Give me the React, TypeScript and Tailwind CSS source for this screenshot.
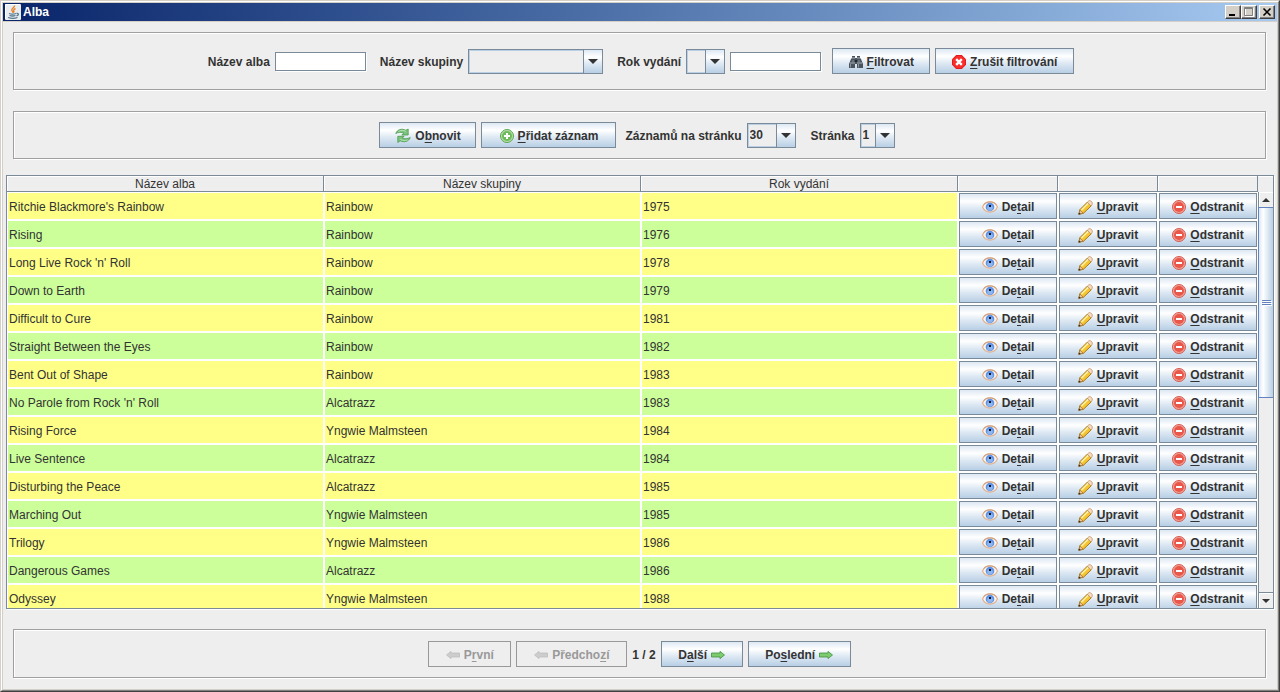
import {useState} from 'react';
import type {ReactNode} from 'react';
import clsx from 'clsx';

type Album = {title: string; band: string; year: number};

const ALBUMS: Album[] = [
  {title: "Ritchie Blackmore's Rainbow", band: 'Rainbow', year: 1975},
  {title: 'Rising', band: 'Rainbow', year: 1976},
  {title: "Long Live Rock 'n' Roll", band: 'Rainbow', year: 1978},
  {title: 'Down to Earth', band: 'Rainbow', year: 1979},
  {title: 'Difficult to Cure', band: 'Rainbow', year: 1981},
  {title: 'Straight Between the Eyes', band: 'Rainbow', year: 1982},
  {title: 'Bent Out of Shape', band: 'Rainbow', year: 1983},
  {title: "No Parole from Rock 'n' Roll", band: 'Alcatrazz', year: 1983},
  {title: 'Rising Force', band: 'Yngwie Malmsteen', year: 1984},
  {title: 'Live Sentence', band: 'Alcatrazz', year: 1984},
  {title: 'Disturbing the Peace', band: 'Alcatrazz', year: 1985},
  {title: 'Marching Out', band: 'Yngwie Malmsteen', year: 1985},
  {title: 'Trilogy', band: 'Yngwie Malmsteen', year: 1986},
  {title: 'Dangerous Games', band: 'Alcatrazz', year: 1986},
  {title: 'Odyssey', band: 'Yngwie Malmsteen', year: 1988},
];

/* ---------- icons ---------- */

function JavaIcon() {
  return (
    <svg width="16" height="16" viewBox="0 0 16 16" fill="none" aria-hidden="true">
      <rect width="16" height="16" rx="1" fill="#e9edf0" />
      <path d="M.5 15V.5H15" stroke="#fff" />
      <path d="M9.500 1.500c.6 2-3.600 2.600-2.600 5 .4 1 1.200 1.300 1.300 2.500M10.500 4.500c-2 1-2.400 2-1.300 4" stroke="#e8842a" strokeWidth="1.400" />
      <path d="M4 9.500c2 .8 5 .8 7 0M4.500 11.500c2 .7 4 .7 6 0M3 13.500c3 1 7 1 9.500 0M11.500 9.500c2.500-.6 2.500 1.800 0 2.300" stroke="#55788f" strokeWidth="1.300" />
    </svg>
  );
}

function BinocularsIcon() {
  return (
    <svg width="14" height="14" viewBox="0 0 14 14" aria-hidden="true">
      <path d="M3 1h3v2h2V1h3v2l1 1 2 5v4H8V9H6v4H0V9l2-5 1-1z" fill="#4a525c" />
      <path d="M3 3h3M8 3h3M1 8h5M8 8h5" stroke="#aab2bb" />
      <path d="M1.500 9v3.500M4 5v2M9.500 9v3.500M10 5v2" stroke="#8a949e" />
      <path d="M6 5h2v2H6z" fill="#1f242a" />
    </svg>
  );
}

function CancelIcon() {
  return (
    <svg width="14" height="14" viewBox="0 0 14 14" aria-hidden="true">
      <path d="M4.200 0h5.600L14 4.200v5.600L9.800 14H4.200L0 9.800V4.200z" fill="#e01b1b" />
      <path d="M4.600 1h4.800L13 4.600v4.800L9.400 13H4.600L1 9.400V4.600z" fill="#fb2c2c" />
      <path d="M4.200 4.200l5.600 5.600M9.800 4.200L4.200 9.800" stroke="#fff" strokeWidth="2.400" />
    </svg>
  );
}

function RefreshIcon() {
  return (
    <svg width="16" height="16" viewBox="0 0 16 16" stroke="#4a9a4e" strokeWidth=".8" strokeLinejoin="round" aria-hidden="true">
      <path d="M.8 5.500C2 1.500 7 .2 10.800 2.200L13.200 1v6H6.800l2-1.700C6.500 4 3.500 4 .8 5.500z" fill="#7cc47d" />
      <path d="M15.200 9.500C14 13.500 9 14.800 5.200 12.800L2.800 14.500V8.300h6.400l-2 1.600c2.300 1.300 5.300 1.200 8-.4z" fill="#7cc47d" />
      <path d="M3.500 3.700C5.500 2 8.500 2 10.800 3.400M12.500 11.800c-2 1.200-4.800 1-7.200-.4" fill="none" stroke="#c4e8c0" />
    </svg>
  );
}

function AddIcon() {
  return (
    <svg width="14" height="14" viewBox="0 0 14 14" aria-hidden="true">
      <circle cx="7" cy="7" r="6.500" fill="#b9e0a8" stroke="#5aa552" />
      <circle cx="7" cy="7" r="5" fill="#6dbb5c" />
      <path d="M7 4v6M4 7h6" stroke="#fff" strokeWidth="2" />
    </svg>
  );
}

function EyeIcon() {
  return (
    <svg width="16" height="14" viewBox="0 0 16 14" fill="none" aria-hidden="true">
      <path d="M.5 7C3.500 0 12.500 0 15.500 7 12.500 13.800 3.500 13.800.5 7z" fill="#f8f3ef" stroke="#e3b08a" strokeWidth="1.200" />
      <path d="M1.500 4.800C4.500 1 11.500 1 14.500 4.800" stroke="#cf9a76" />
      <circle cx="8" cy="7" r="4.300" fill="#5f92e2" />
      <circle cx="8" cy="8" r="2.800" fill="#8fb6ef" />
      <rect x="7" y="5" width="2" height="2" fill="#0d1730" />
    </svg>
  );
}

function PencilIcon() {
  return (
    <svg width="15" height="15" viewBox="0 0 15 15" strokeLinejoin="round" aria-hidden="true">
      <path d="M2 9.500L9.500 2l3.800 3.800L5.500 13.200.8 14.300z" fill="#f5c531" stroke="#a9781f" />
      <path d="M3.300 10.300l7-7" stroke="#fdf0a8" strokeWidth="1.600" />
      <path d="M9.300 2.200L10.500 1c2-1.300 4.800 1.500 3.500 3.500l-1.200 1.300z" fill="#f6dcc2" stroke="#c08f62" strokeWidth=".8" />
      <path d="M1.800 10l3.400 3.200-4.400 1z" fill="#f0c9a0" stroke="#8a6226" strokeWidth=".6" />
      <path d="M1.100 12.400l1.700 1.500-2.300.6z" fill="#3b2b18" />
    </svg>
  );
}

function RemoveIcon() {
  return (
    <svg width="14" height="14" viewBox="0 0 14 14" aria-hidden="true">
      <circle cx="7" cy="7" r="6.500" fill="#f3a196" stroke="#d5594f" />
      <circle cx="7" cy="7" r="5" fill="#e9564a" />
      <path d="M4 7h6" stroke="#fff" strokeWidth="2" />
    </svg>
  );
}

function ArrowIcon({left = false}: {left?: boolean}) {
  return (
    <svg width="14" height="8" viewBox="0 0 14 8" strokeLinejoin="round" aria-hidden="true">
      {left
        ? <path d="M13.500 2v4H5v1.600L.5 4 5 .4V2z" fill="#cdcdcd" stroke="#bdbdbd" strokeWidth=".8" />
        : <path d="M.5 2v4H9v1.600L13.500 4 9 .4V2z" fill="#7ccb6f" stroke="#3f8f3c" strokeWidth=".8" />}
    </svg>
  );
}

/* ---------- controls ---------- */

// text with the mnemonic letter underlined, e.g. "De_tail"
function Mnemonic({text}: {text: string}) {
  const [before, rest] = text.split('_');
  return (
    <span className="whitespace-nowrap">
      {before}<span className="underline underline-offset-2">{rest[0]}</span>{rest.slice(1)}
    </span>
  );
}

type ButtonProps = {text: string; icon: ReactNode; className: string; iconAfter?: boolean; disabled?: boolean};

function MetalButton({text, icon, className, iconAfter, disabled}: ButtonProps) {
  return (
    <button
      type="button"
      disabled={disabled}
      className={clsx(
        'flex h-[26px] shrink-0 items-center justify-center gap-1 border pt-0.5 text-xs font-bold',
        disabled
          ? 'border-[#999999] text-[#999999]'
          : 'border-[#7a8a99] bg-[linear-gradient(#dde8f3,#ffffff_30%,#dde8f3_60%,#b8cfe5)] text-[#333333]',
        className,
      )}
    >
      {!iconAfter && icon}
      <Mnemonic text={text} />
      {iconAfter && icon}
    </button>
  );
}

function Combo({id, options, className}: {id: string; options: string[]; className: string}) {
  return (
    <div className={clsx('relative h-[25px] border border-[#7a8a99]', className)}>
      <select id={id} className="h-full w-full appearance-none border border-[#b8cfe5] bg-[#eeeeee] pl-px text-xs font-bold outline-none">
        {options.map(o => <option key={o}>{o}</option>)}
      </select>
      <span className="pointer-events-none absolute inset-y-0 right-0 flex w-[19px] items-center justify-center border-l border-[#7a8a99] bg-[linear-gradient(#dde8f3,#ffffff_30%,#dde8f3_60%,#b8cfe5)]">
        <svg width="10" height="5" viewBox="0 0 10 5" aria-hidden="true"><path d="M0 0h10L5 5z" fill="#333" /></svg>
      </span>
    </div>
  );
}

function Field({id, label, children}: {id: string; label: string; children: ReactNode}) {
  return (
    <div className="flex items-center gap-[5px]">
      <label htmlFor={id} className="whitespace-nowrap pt-0.5 font-bold">{label}</label>
      {children}
    </div>
  );
}

const INPUT = 'h-[19px] w-[91px] border border-[#7a8a99] bg-white px-1 text-xs shadow-[1px_1px_0_#fff] outline-none';

function Panel({children, className}: {children: ReactNode; className: string}) {
  return (
    <div className={clsx('mr-[11px] ml-[10px] flex shrink-0 items-center justify-center border border-[#a0a0a0] shadow-[1px_1px_0_#fff,inset_1px_1px_0_#fff]', className)}>
      {children}
    </div>
  );
}

/* ---------- window ---------- */

function TitleButton({label, children}: {label: string; children: ReactNode}) {
  return (
    <button
      type="button"
      aria-label={label}
      className="h-[14px] w-4 border border-t-white border-r-[#404040] border-b-[#404040] border-l-white bg-[#d4d0c8] shadow-[inset_-1px_-1px_0_#808080]"
    >
      <svg width="14" height="12" viewBox="0 0 14 12" fill="none" aria-hidden="true">{children}</svg>
    </button>
  );
}

function TitleBar() {
  return (
    <header className="flex h-[18px] shrink-0 items-center bg-linear-to-r from-[#0a246a] to-[#a6caf0] px-0.5">
      <JavaIcon />
      <h1 className="ml-0.5 flex-1 text-xs font-bold text-white">Alba</h1>
      <TitleButton label="Minimalizovat"><path d="M3 9h6" stroke="#000" strokeWidth="2" /></TitleButton>
      <TitleButton label="Maximalizovat">
        <path d="M3.500 2.500h8v8h-8z" stroke="#fff" />
        <path d="M2.500 1.500h8v8h-8zM2 2.500h9" stroke="#808080" />
      </TitleButton>
      <span className="w-0.5" />
      <TitleButton label="Zavřít"><path d="M3.500 2.500l7 7M10.500 2.500l-7 7" stroke="#000" strokeWidth="1.600" /></TitleButton>
    </header>
  );
}

function ScrollBar() {
  return (
    <div className="flex w-[15px] shrink-0 flex-col">
      <div className="h-4 shrink-0 shadow-[inset_0_1px_0_#fff]" />
      <div className="flex min-h-0 flex-1 flex-col border-l border-[#7a8a99] bg-[#eeeeee]">
        <button type="button" aria-label="Nahoru" className="flex h-[15px] shrink-0 items-center justify-center shadow-[inset_1px_1px_0_#fff]">
          <svg width="8" height="4" viewBox="0 0 8 4" aria-hidden="true"><path d="M0 4h8L4 0z" fill="#333" /></svg>
        </button>
        <div className="min-h-0 flex-1 border-b border-[#7a8a99]">
          <div className="-ml-px flex h-[191px] max-h-full flex-col items-center justify-center gap-px border-y border-l border-[#6382bf] bg-linear-to-r from-[#dde8f3] via-white via-30% to-[#b8cfe5]">
            <span className="h-px w-[9px] bg-[#6382bf] shadow-[1px_1px_0_#fff]" />
            <span className="h-px w-[9px] bg-[#6382bf] shadow-[1px_1px_0_#fff]" />
            <span className="h-px w-[9px] bg-[#6382bf] shadow-[1px_1px_0_#fff]" />
          </div>
        </div>
        <button type="button" aria-label="Dolů" className="flex h-[15px] shrink-0 items-center justify-center shadow-[inset_1px_1px_0_#fff]">
          <svg width="8" height="4" viewBox="0 0 8 4" aria-hidden="true"><path d="M0 0h8L4 4z" fill="#333" /></svg>
        </button>
      </div>
    </div>
  );
}

const TH = 'h-4 border-r border-b border-[#7a8a99] bg-[#eeeeee] px-0 pt-0.5 pb-0 font-normal leading-[13px] shadow-[inset_1px_1px_0_#fff]';

function AlbumTable() {
  return (
    <div className="mx-[3px] mt-4 flex min-h-0 flex-1 border border-[#7a8a99] shadow-[1px_1px_0_#fff]">
      <div className="min-w-0 flex-1 overflow-hidden bg-white">
        <table className="w-full table-fixed border-separate border-spacing-0">
          <thead>
            <tr>
              <th className={TH}>Název alba</th>
              <th className={TH}>Název skupiny</th>
              <th className={TH}>Rok vydání</th>
              <th className={clsx(TH, 'w-[100px]')} />
              <th className={clsx(TH, 'w-[100px]')} />
              <th className={clsx(TH, 'w-[100px]')} />
            </tr>
          </thead>
          <tbody>
            {ALBUMS.map((a, i) => {
              const cell = clsx('h-7 border border-white px-px pt-0.5 pb-0', i % 2 ? 'bg-[#ccff99]' : 'bg-[#ffff88]');
              return (
                <tr key={a.title}>
                  <td className={cell}>{a.title}</td>
                  <td className={cell}>{a.band}</td>
                  <td className={cell}>{a.year}</td>
                  <td className="p-px"><MetalButton text="De_tail" icon={<EyeIcon />} className="w-full" /></td>
                  <td className="p-px"><MetalButton text="_Upravit" icon={<PencilIcon />} className="w-full" /></td>
                  <td className="p-px"><MetalButton text="_Odstranit" icon={<RemoveIcon />} className="w-full" /></td>
                </tr>
              );
            })}
          </tbody>
        </table>
      </div>
      <ScrollBar />
    </div>
  );
}

export default function App() {
  const [title, setTitle] = useState('');
  const [year, setYear] = useState('');

  return (
    <div className="h-screen border border-t-[#d4d0c8] border-r-[#404040] border-b-[#404040] border-l-[#d4d0c8] font-['Liberation_Sans',Arial,sans-serif] text-xs text-[#333333]">
      <div className="h-full border border-t-white border-r-[#808080] border-b-[#808080] border-l-white bg-[#d4d0c8] p-px">
        <div className="flex h-full flex-col">
          <TitleBar />
          <main className="mt-px flex min-h-0 flex-1 flex-col bg-[#eeeeee] pb-[11px]">
            <Panel className="mt-[10px] h-[58px] gap-[11px] pl-[3px]">
              <div className="flex items-center gap-[14px]">
                <Field id="title" label="Název alba">
                  <input id="title" value={title} onChange={e => setTitle(e.target.value)} className={INPUT} />
                </Field>
                <Field id="band" label="Název skupiny">
                  <Combo id="band" options={['', 'Rainbow', 'Alcatrazz', 'Yngwie Malmsteen']} className="w-[135px]" />
                </Field>
                <Field id="op" label="Rok vydání">
                  <Combo id="op" options={['', '<', '=', '>']} className="w-[39px]" />
                  <input aria-label="Rok" value={year} onChange={e => setYear(e.target.value)} className={INPUT} />
                </Field>
              </div>
              <div className="flex gap-[5px]">
                <MetalButton text="_Filtrovat" icon={<BinocularsIcon />} className="w-[98px]" />
                <MetalButton text="_Zrušit filtrování" icon={<CancelIcon />} className="w-[139px]" />
              </div>
            </Panel>

            <Panel className="mt-[21px] h-[48px] gap-[9px] pr-[5px]">
              <div className="flex gap-[5px]">
                <MetalButton text="O_bnovit" icon={<RefreshIcon />} className="w-[97px]" />
                <MetalButton text="_Přidat záznam" icon={<AddIcon />} className="w-[135px]" />
              </div>
              <div className="flex gap-[15px]">
                <Field id="perPage" label="Záznamů na stránku">
                  <Combo id="perPage" options={['30', '50', '100']} className="w-[49px]" />
                </Field>
                <Field id="page" label="Stránka">
                  <Combo id="page" options={['1', '2']} className="w-[35px]" />
                </Field>
              </div>
            </Panel>

            <AlbumTable />

            <Panel className="mt-5 h-[49px] gap-[5px]">
              <MetalButton text="P_rvní" icon={<ArrowIcon left />} className="w-[83px]" disabled />
              <MetalButton text="Předcho_zí" icon={<ArrowIcon left />} className="w-[111px]" disabled />
              <span className="pt-0.5 font-bold">1 / 2</span>
              <MetalButton text="D_alší" icon={<ArrowIcon />} className="w-[82px]" iconAfter />
              <MetalButton text="Po_slední" icon={<ArrowIcon />} className="w-[103px]" iconAfter />
            </Panel>
          </main>
        </div>
      </div>
    </div>
  );
}
